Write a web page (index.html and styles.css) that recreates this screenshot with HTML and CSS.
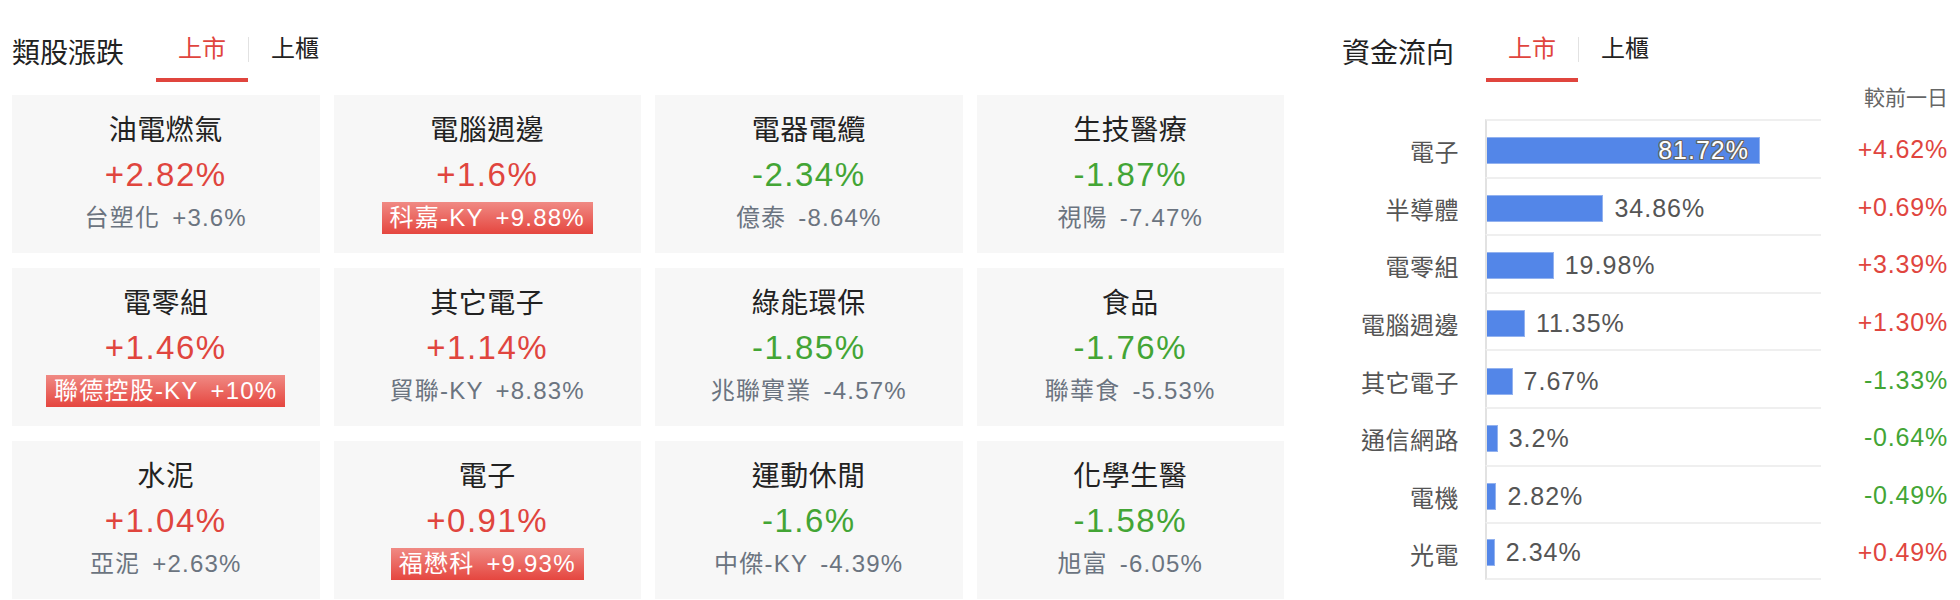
FILE: index.html
```html
<!DOCTYPE html>
<html lang="zh-Hant">
<head>
  <meta charset="UTF-8" />
  <title>類股漲跌 / 資金流向</title>
  <link rel="stylesheet" href="styles.css">
</head>
<body>
  <div class="page">
    <section class="sectors">
      <div class="head">
        <h2 class="title">類股漲跌</h2>
        <span class="tab active">上市</span>
        <span class="sep"></span>
        <span class="tab">上櫃</span>
      </div>

      <div class="grid">
        <div class="card">
          <div class="name">油電燃氣</div>
          <div class="pct up">+2.82%</div>
          <div class="lead"><span class="stock">台塑化<b>+3.6%</b></span></div>
        </div>
        <div class="card">
          <div class="name">電腦週邊</div>
          <div class="pct up">+1.6%</div>
          <div class="lead"><span class="stock limit">科嘉-KY<b>+9.88%</b></span></div>
        </div>
        <div class="card">
          <div class="name">電器電纜</div>
          <div class="pct down">-2.34%</div>
          <div class="lead"><span class="stock">億泰<b>-8.64%</b></span></div>
        </div>
        <div class="card">
          <div class="name">生技醫療</div>
          <div class="pct down">-1.87%</div>
          <div class="lead"><span class="stock">視陽<b>-7.47%</b></span></div>
        </div>

        <div class="card">
          <div class="name">電零組</div>
          <div class="pct up">+1.46%</div>
          <div class="lead"><span class="stock limit">聯德控股-KY<b>+10%</b></span></div>
        </div>
        <div class="card">
          <div class="name">其它電子</div>
          <div class="pct up">+1.14%</div>
          <div class="lead"><span class="stock">貿聯-KY<b>+8.83%</b></span></div>
        </div>
        <div class="card">
          <div class="name">綠能環保</div>
          <div class="pct down">-1.85%</div>
          <div class="lead"><span class="stock">兆聯實業<b>-4.57%</b></span></div>
        </div>
        <div class="card">
          <div class="name">食品</div>
          <div class="pct down">-1.76%</div>
          <div class="lead"><span class="stock">聯華食<b>-5.53%</b></span></div>
        </div>

        <div class="card">
          <div class="name">水泥</div>
          <div class="pct up">+1.04%</div>
          <div class="lead"><span class="stock">亞泥<b>+2.63%</b></span></div>
        </div>
        <div class="card">
          <div class="name">電子</div>
          <div class="pct up">+0.91%</div>
          <div class="lead"><span class="stock limit">福懋科<b>+9.93%</b></span></div>
        </div>
        <div class="card">
          <div class="name">運動休閒</div>
          <div class="pct down">-1.6%</div>
          <div class="lead"><span class="stock">中傑-KY<b>-4.39%</b></span></div>
        </div>
        <div class="card">
          <div class="name">化學生醫</div>
          <div class="pct down">-1.58%</div>
          <div class="lead"><span class="stock">旭富<b>-6.05%</b></span></div>
        </div>
      </div>
    </section>

    <section class="flow">
      <div class="head">
        <h2 class="title">資金流向</h2>
        <span class="tab active">上市</span>
        <span class="sep"></span>
        <span class="tab">上櫃</span>
      </div>
      <div class="legend">較前一日</div>

      <div class="chart">
        <div class="row">
          <span class="label">電子</span>
          <div class="track"><div class="bar inside" style="width: 81.72%"><span class="val">81.72%</span></div></div>
          <span class="chg up">+4.62%</span>
        </div>
        <div class="row">
          <span class="label">半導體</span>
          <div class="track"><div class="bar" style="width: 34.86%"></div><span class="val">34.86%</span></div>
          <span class="chg up">+0.69%</span>
        </div>
        <div class="row">
          <span class="label">電零組</span>
          <div class="track"><div class="bar" style="width: 19.98%"></div><span class="val">19.98%</span></div>
          <span class="chg up">+3.39%</span>
        </div>
        <div class="row">
          <span class="label">電腦週邊</span>
          <div class="track"><div class="bar" style="width: 11.35%"></div><span class="val">11.35%</span></div>
          <span class="chg up">+1.30%</span>
        </div>
        <div class="row">
          <span class="label">其它電子</span>
          <div class="track"><div class="bar" style="width: 7.67%"></div><span class="val">7.67%</span></div>
          <span class="chg down">-1.33%</span>
        </div>
        <div class="row">
          <span class="label">通信網路</span>
          <div class="track"><div class="bar" style="width: 3.2%"></div><span class="val">3.2%</span></div>
          <span class="chg down">-0.64%</span>
        </div>
        <div class="row">
          <span class="label">電機</span>
          <div class="track"><div class="bar" style="width: 2.82%"></div><span class="val">2.82%</span></div>
          <span class="chg down">-0.49%</span>
        </div>
        <div class="row last">
          <span class="label">光電</span>
          <div class="track"><div class="bar" style="width: 2.34%"></div><span class="val">2.34%</span></div>
          <span class="chg up">+0.49%</span>
        </div>
      </div>
    </section>
  </div>
</body>
</html>
```

FILE: styles.css
```css
* { margin: 0; padding: 0; box-sizing: border-box; }
body {
  font-family: "Liberation Sans", "Noto Sans CJK TC", sans-serif;
  background: #fff;
  color: #222;
}
.page {
  display: flex;
  padding: 20px 0 0 12px;
}

/* section header with market tabs */
.head {
  display: flex;
  align-items: center;
  height: 62px;
}
.title {
  font-size: 28px;
  font-weight: normal;
  color: #222;
  margin-right: 32px;
}
.tab {
  height: 62px;
  line-height: 58px;
  padding: 0 22px;
  font-size: 24px;
  color: #222;
  border-bottom: 4px solid transparent;
}
.tab.active {
  color: #e0453e;
  border-bottom-color: #e0453e;
}
.sep {
  width: 1px;
  height: 25px;
  margin-top: -4px;
  background: #e2e2e2;
}

/* sector cards */
.sectors { width: 1272px; }
.grid {
  display: grid;
  grid-template-columns: repeat(4, 1fr);
  grid-auto-rows: 158px;
  gap: 15px 14px;
  margin-top: 13px;
}
.card {
  background: #f7f7f7;
  display: flex;
  flex-direction: column;
  justify-content: center;
  align-items: center;
  text-align: center;
}
.name {
  font-size: 28px;
  line-height: 42px;
  letter-spacing: 0.5px;
  color: #222;
}
.pct {
  font-size: 33px;
  line-height: 46px;
  letter-spacing: 1.5px;
}
.up { color: #e0453e; }
.down { color: #43a535; }
.lead {
  height: 40px;
  display: flex;
  align-items: center;
}
.stock {
  font-size: 24px;
  line-height: 32px;
  letter-spacing: 1.2px;
  color: #6b7480;
  padding: 0 8px;
}
.stock b {
  font-weight: normal;
  margin-left: 12px;
}
.stock.limit {
  color: #fff;
  background: linear-gradient(#f08a84, #e5463f);
}

/* fund flow chart */
.flow {
  width: 606px;
  margin-left: 58px;
}
.legend {
  text-align: right;
  font-size: 21px;
  line-height: 30px;
  margin-top: 1px;
  color: #666;
}
.chart { margin-top: 6px; }
.row {
  display: flex;
  height: 57.6px;
}
.label {
  width: 143px;
  padding-right: 26px;
  text-align: right;
  font-size: 24px;
  letter-spacing: 0.5px;
  color: #555;
  align-self: center;
  padding-top: 6px;
}
.track {
  width: 336px;
  display: flex;
  align-items: center;
  padding-top: 4px;
  border-left: 2px solid #e2e2e2;
  border-top: 2px solid #efefef;
}
.row.last .track { border-bottom: 2px solid #efefef; }
.bar {
  height: 27px;
  background: #5386e8;
  border: 1px solid #93b2ef;
  border-left: 0;
}
.val {
  font-size: 25px;
  letter-spacing: 1px;
  color: #555;
  margin-left: 11px;
}
.bar.inside {
  display: flex;
  justify-content: flex-end;
  align-items: center;
  padding-right: 10px;
}
.bar.inside .val {
  color: #fff;
  margin-left: 0;
  text-shadow: 1px 0 #666, -1px 0 #666, 0 1px #666, 0 -1px #666,
    1px 1px #666, -1px -1px #666, 1px -1px #666, -1px 1px #666;
}
.chg {
  flex: 1;
  text-align: right;
  font-size: 25px;
  letter-spacing: 0.8px;
  align-self: center;
  padding-top: 4px;
}
```
